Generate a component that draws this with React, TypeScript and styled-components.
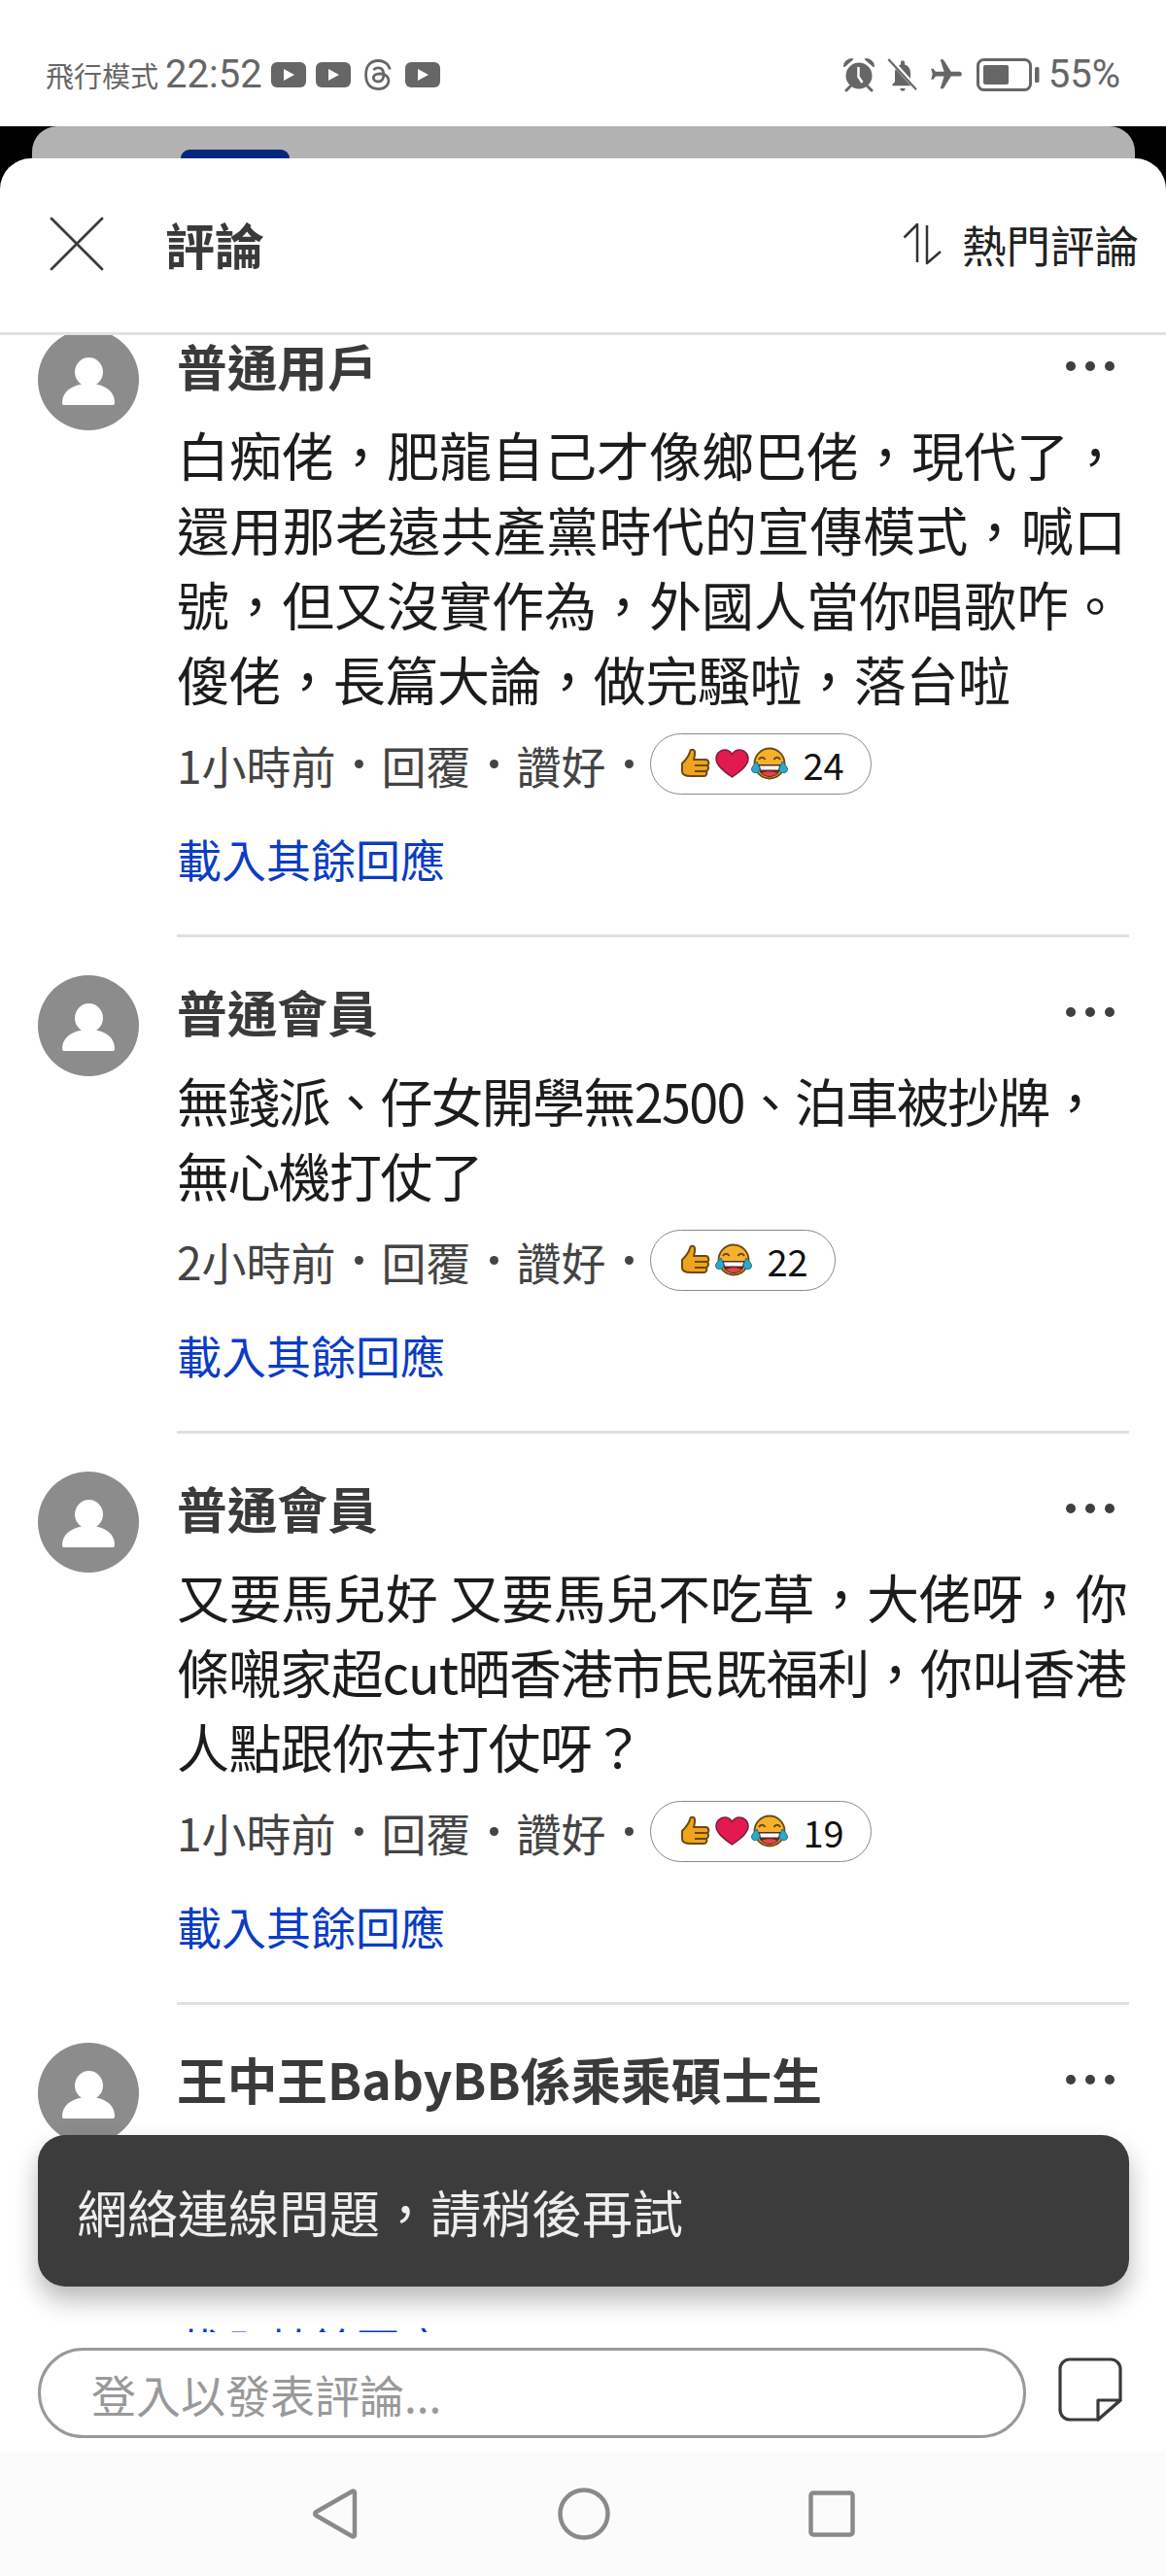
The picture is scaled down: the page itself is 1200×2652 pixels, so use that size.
import React from 'react';
import styled, { createGlobalStyle } from 'styled-components';
import { FaThreads } from 'react-icons/fa6';

const Global = createGlobalStyle`
  html, body { margin: 0; padding: 0; background: #000; }
  body { font-family: "Noto Sans CJK TC", "Noto Sans", sans-serif; }
  * { box-sizing: border-box; }
`;

const Page = styled.div`
  width: 1200px; height: 2652px; display: flex; flex-direction: column;
  background: #000; overflow: hidden;
`;
const StatusBar = styled.div`
  height: 130px; flex: none; background: #fff; color: #666;
  display: flex; align-items: center; justify-content: space-between;
  padding: 24px 47px 0 47px;
`;
const StatusGroup = styled.div`display: flex; align-items: center;`;
const Mode = styled.span`font-size: 29px; line-height: 40px; margin-right: 7px;`;
const Clock = styled.span`font-family: Roboto, sans-serif; font-size: 40px; line-height: 40px; margin-right: 9px;`;
const Percent = styled.span`font-family: Roboto, sans-serif; font-size: 40px; line-height: 40px; margin-left: 9px;`;
const PlayBadge = styled.span`
  width: 36px; height: 26px; border-radius: 6px; background: #666; margin-right: 10px;
  display: flex; align-items: center; justify-content: center;
  &::after { content: ''; border-left: 11px solid #fff; border-top: 6px solid transparent; border-bottom: 6px solid transparent; margin-left: 2px; }
`;
const ThreadsMark = styled(FaThreads)`width: 30px; height: 34px; margin: 0 13px 0 3px; color: #666;`;
const StatusIcon = styled.svg<{ $gap?: number }>`display: block; margin-right: ${p => p.$gap ?? 12}px; flex: none;`;
const PlaneIcon = styled(StatusIcon)`transform: rotate(90deg);`;

const BackStrip = styled.div`height: 33px; flex: none; padding: 0 32px 0 33px; background: #000;`;
const BackCard = styled.div`
  height: 33px; background: #b2b2b2; border-radius: 26px 26px 0 0;
  display: flex; align-items: flex-end; padding-left: 153px;
`;
const BackTab = styled.div`width: 112px; height: 9px; background: #00287f; border-radius: 9px 9px 0 0;`;

const Sheet = styled.div`
  flex: 1; min-height: 0; position: relative; background: #fff;
  border-radius: 32px 32px 0 0; display: flex; flex-direction: column; overflow: hidden;
`;
const Header = styled.header`
  height: 182px; flex: none; border-bottom: 3px solid #e2e2e2; position: relative; z-index: 2; background: transparent;
  display: flex; align-items: center; padding: 0 28px 4px 51px;
`;
const CloseIcon = styled.svg`width: 56px; height: 56px; flex: none;`;
const Title = styled.h1`margin: 0 0 0 63px; font-size: 51px; line-height: 60px; font-weight: 700; color: #3a3a3a; flex: 1;`;
const SortIcon = styled.svg`width: 42px; height: 44px; flex: none; margin-right: 19px;`;
const SortLabel = styled.span`font-size: 45.5px; line-height: 60px; font-weight: 400; color: #222;`;

const List = styled.div`flex: 1; min-height: 0; overflow: hidden;`;
const ListInner = styled.div`margin-top: -6px;`;
const Comment = styled.article`
  display: grid; grid-template-columns: 104px 1fr; column-gap: 39px; padding: 0 38px 0 39px;
`;
const Avatar = styled.svg`width: 104px; height: 104px; display: block;`;
const Content = styled.div`min-width: 0;`;
const NameRow = styled.div`display: flex; align-items: center; justify-content: space-between; height: 74px;`;
const Name = styled.div`font-size: 51.7px; line-height: 74px; font-weight: 700; color: #3a3a3a; white-space: nowrap;`;
const More = styled.div`
  display: flex; gap: 10px; margin-right: 15px; margin-top: 2px;
  span { width: 10px; height: 10px; border-radius: 50%; background: #3f3f3f; }
`;
const Body = styled.div`margin-top: 16px; font-size: 54px; line-height: 77px; color: #1c1c1c; white-space: nowrap;`;
const Line = styled.div<{ $track?: number }>`display: block; letter-spacing: ${p => p.$track ?? 0}px;`;
const Meta = styled.div`
  margin-top: 18px; height: 63px; display: flex; align-items: center;
  font-size: 46px; color: #444; white-space: nowrap;
`;
const Sep = styled.span`
  width: 47px; flex: none; display: flex; justify-content: center;
  &::before { content: ''; width: 9px; height: 9px; border-radius: 50%; background: #444; }
`;
const Pill = styled.div`
  margin-left: -2px; height: 63px; border: 1.5px solid #8a8a8a; border-radius: 32px;
  display: flex; align-items: center; padding: 0 27px 0 29px; background: #fff;
`;
const Emoji = styled.svg`width: 35px; height: 35px; display: block; flex: none; margin-right: 2px;`;
const Count = styled.span`margin-left: 14px; font-size: 38px; font-weight: 400; color: #111;`;
const LoadMore = styled.div`margin-top: 35px; font-size: 46px; line-height: 60px; color: #0b3cc4; white-space: nowrap;`;
const Divider = styled.div`margin: 49px 0 39px; height: 3px; background: #e0e0e0;`;

const Toast = styled.div`
  position: absolute; left: 39px; right: 38px; bottom: 298px; height: 156px; z-index: 3;
  background: #3c3c3c; border-radius: 28px; color: #eee; font-size: 52px;
  display: flex; align-items: center; padding-left: 40px;
  box-shadow: 0 14px 26px rgba(0,0,0,.28);
`;

const Composer = styled.div`
  flex: none; height: 123px; background: #fff; position: relative; z-index: 2;
  display: flex; align-items: flex-start; padding: 16px 45px 0 39px; gap: 33px;
`;
const InputBox = styled.div`
  flex: 1; height: 93px; border: 3px solid #999; border-radius: 47px;
  display: flex; align-items: center; padding-left: 52px;
  font-size: 46px; color: #999; white-space: nowrap;
`;
const NoteIcon = styled.svg`width: 66px; height: 66px; flex: none; margin-top: 10px;`;
const NavBar = styled.nav`
  flex: none; height: 128px; background: #fbfbfb; display: flex; align-items: center;
  justify-content: center; padding-bottom: 0;
`;
const NavIcon = styled.svg<{ $left?: number }>`display: block; margin-left: ${p => p.$left ?? 0}px; flex: none;`;

const Person = () => (
  <Avatar viewBox="0 0 104 104">
    <circle cx="52" cy="52" r="52" fill="#8c8c8c" />
    <ellipse cx="52.500" cy="44" rx="14.500" ry="15" fill="#fff" />
    <path d="M25 76c0-13 12-20 27.500-20S79 63 79 76c0 1.500-1 2-2 2H27c-1 0-2-.5-2-2z" fill="#fff" />
  </Avatar>
);
const Thumb = () => (
  <Emoji viewBox="0 0 35 35">
    <path d="M3 17c3-3 7-7 8-12 .5-3 4.500-3 5 0 .5 3-.5 6-1 8h12c4 0 4 5 2 6 2 2 1 5-1 6 1 2 0 5-2 5H12c-4 0-9-1-9-5z" fill="#f0a31c" stroke="#6a4a14" strokeWidth="2" strokeLinejoin="round" />
    <path d="M16 13h11M16 19h14M16 25h12" stroke="#6a4a14" strokeWidth="2" fill="none" />
  </Emoji>
);
const Heart = () => (
  <Emoji viewBox="0 0 35 35">
    <path d="M17.500 31C9 25 1 19 1 12 1 6 6 3 10 3c3.500 0 6 2 7.500 4.500C19 5 21.500 3 25 3c4 0 9 3 9 9 0 7-8 13-16.500 19z" fill="#e21a50" stroke="#7d1f3a" strokeWidth="1.500" />
  </Emoji>
);
const LaughMark = styled(Emoji)`width: 38px;`;
const Laugh = () => (
  <LaughMark viewBox="0 0 38 35">
    <circle cx="19" cy="17" r="15.500" fill="#f6b12c" stroke="#6a4a14" strokeWidth="1.800" />
    <path d="M8 13c1.500-3 5-3 6.500 0M23.500 13c1.500-3 5-3 6.500 0" stroke="#6a4a14" strokeWidth="2" fill="none" />
    <path d="M7 18h24c0 8-5 13-12 13S7 26 7 18z" fill="#5a2a20" />
    <path d="M9 19.500h20l-1 4H10z" fill="#fff" />
    <path d="M11 27c4-2.500 12-2.500 16 0-4 4-12 4-16 0z" fill="#e8404a" />
    <path d="M6 15c-3 3-5.500 6-5.500 8 0 3 3 4 5 3.500 3-.5 4-3.500 3-5.500z" fill="#2fa9c9" stroke="#21708a" strokeWidth="1" />
    <path d="M32 15c3 3 5.500 6 5.500 8 0 3-3 4-5 3.500-3-.5-4-3.500-3-5.500z" fill="#2fa9c9" stroke="#21708a" strokeWidth="1" />
  </LaughMark>
);

type Reaction = 'thumb' | 'heart' | 'laugh';
const reactionIcon: Record<Reaction, React.ReactNode> = { thumb: <Thumb />, heart: <Heart />, laugh: <Laugh /> };
type TextLine = { text: string; track?: number };
type Item = { name: string; lines: TextLine[]; time?: string; reactions?: Reaction[]; count?: number };

const items: Item[] = [
  { name: '普通用戶', lines: [
    { text: '白痴佬，肥龍自己才像鄉巴佬，現代了，' },
    { text: '還用那老遠共產黨時代的宣傳模式，喊口', track: 0.3 },
    { text: '號，但又沒實作為，外國人當你唱歌咋。' },
    { text: '傻佬，長篇大論，做完騷啦，落台啦', track: -0.4 },
  ], time: '1小時前', reactions: ['thumb', 'heart', 'laugh'], count: 24 },
  { name: '普通會員', lines: [
    { text: '無錢派、仔女開學無2500、泊車被抄牌，', track: -1.7 },
    { text: '無心機打仗了', track: -1.7 },
  ], time: '2小時前', reactions: ['thumb', 'laugh'], count: 22 },
  { name: '普通會員', lines: [
    { text: '又要馬兒好 又要馬兒不吃草，大佬呀，你', track: -0.3 },
    { text: '條嚫家超cut晒香港市民既福利，你叫香港', track: -1.1 },
    { text: '人點跟你去打仗呀？', track: -0.6 },
  ], time: '1小時前', reactions: ['thumb', 'heart', 'laugh'], count: 19 },
  { name: '王中王BabyBB係乘乘碩士生', lines: [{ text: '\u00a0' }] },
];

export default function App() {
  return (
    <Page>
      <Global />
      <StatusBar>
        <StatusGroup>
          <Mode>飛行模式</Mode>
          <Clock>22:52</Clock>
          <PlayBadge />
          <PlayBadge />
          <ThreadsMark />
          <PlayBadge />
        </StatusGroup>
        <StatusGroup>
          <StatusIcon $gap={12} width="34" height="36" viewBox="0 0 34 36">
            <circle cx="17" cy="19" r="13.500" fill="#666" />
            <path d="M2 9c0-4 4-7 8-7zM32 9c0-4-4-7-8-7z" fill="#666" stroke="#666" strokeWidth="2" strokeLinejoin="round" />
            <path d="M8 30l-4 4M26 30l4 4" stroke="#666" strokeWidth="3" strokeLinecap="round" />
            <path d="M16.500 10v10l4 6" stroke="#fff" strokeWidth="2.500" fill="none" />
          </StatusIcon>
          <StatusIcon $gap={10} width="32" height="36" viewBox="0 0 24 27">
            <path d="M12 26c1.100 0 2-.9 2-2h-4c0 1.100.9 2 2 2zm6-7v-7c0-3.070-1.630-5.640-4.500-6.320V4c0-.83-.67-1.500-1.500-1.500s-1.500.67-1.500 1.500v1.680C7.640 6.360 6 8.920 6 12v7l-2 2v1h16v-1l-2-2z" fill="#666" />
            <path d="M2.500 2l20 22" stroke="#fff" strokeWidth="3.500" />
            <path d="M1 1.500l21.500 23.500" stroke="#666" strokeWidth="1.600" />
          </StatusIcon>
          <PlaneIcon $gap={12} width="38" height="38" viewBox="0 0 24 24">
            <path d="M21 16v-2l-8-5V3.500c0-.83-.67-1.500-1.500-1.500S10 2.670 10 3.500V9l-8 5v2l8-2.500V19l-2 1.500V22l3.500-1 3.500 1v-1.500L13 19v-5.500l8 2.500z" fill="#666" />
          </PlaneIcon>
          <StatusIcon $gap={0} width="65" height="34" viewBox="0 0 65 34">
            <rect x="1.500" y="1.500" width="54" height="31" rx="6" fill="none" stroke="#666" strokeWidth="3" />
            <rect x="7" y="7" width="26" height="20" rx="2" fill="#666" />
            <rect x="60" y="9" width="4.500" height="16" rx="1.500" fill="#666" />
          </StatusIcon>
          <Percent>55%</Percent>
        </StatusGroup>
      </StatusBar>
      <BackStrip>
        <BackCard><BackTab /></BackCard>
      </BackStrip>
      <Sheet>
        <Header>
          <CloseIcon viewBox="0 0 56 56">
            <path d="M2 2l52 52M54 2L2 54" stroke="#3c3c3c" strokeWidth="2.800" strokeLinecap="round" />
          </CloseIcon>
          <Title>評論</Title>
          <SortIcon viewBox="0 0 42 44">
            <path d="M15 41V2L1.500 15.500" stroke="#333" strokeWidth="2.500" fill="none" strokeLinejoin="round" />
            <path d="M25 3v39l14-12" stroke="#333" strokeWidth="2.500" fill="none" strokeLinejoin="round" />
          </SortIcon>
          <SortLabel>熱門評論</SortLabel>
        </Header>
        <List>
          <ListInner>
            {items.map((c, i) => (
              <Comment key={i}>
                <Person />
                <Content>
                  <NameRow>
                    <Name>{c.name}</Name>
                    <More><span /><span /><span /></More>
                  </NameRow>
                  <Body>{c.lines.map((l, j) => <Line key={j} $track={l.track}>{l.text}</Line>)}</Body>
                  <Meta>
                    {c.time && (
                      <>
                        {c.time}<Sep />回覆<Sep />讚好<Sep />
                        <Pill>
                          {c.reactions!.map(r => <React.Fragment key={r}>{reactionIcon[r]}</React.Fragment>)}
                          <Count>{c.count}</Count>
                        </Pill>
                      </>
                    )}
                  </Meta>
                  <LoadMore>載入其餘回應</LoadMore>
                  {i < items.length - 1 && <Divider />}
                </Content>
              </Comment>
            ))}
          </ListInner>
        </List>
        <Composer>
          <InputBox>登入以發表評論...</InputBox>
          <NoteIcon viewBox="0 0 66 66">
            <path d="M12 2h42c5.500 0 10 4.500 10 10v32L41 64H12C6.500 64 2 59.500 2 54V12C2 6.500 6.500 2 12 2z" fill="#fff" stroke="#3a3a3a" strokeWidth="3.200" strokeLinejoin="round" />
            <path d="M41 64V44h23z" fill="#fff" stroke="#3a3a3a" strokeWidth="3.200" strokeLinejoin="round" />
          </NoteIcon>
        </Composer>
        <NavBar>
          <NavIcon width="48" height="54" viewBox="0 0 48 54">
            <path d="M44 5v44a1.500 1.500 0 0 1-2.400 1.200L4 28.500a2 2 0 0 1 0-3.200L41.600 3.800A1.500 1.500 0 0 1 44 5z" fill="none" stroke="#8a8a8a" strokeWidth="4.500" strokeLinejoin="round" />
          </NavIcon>
          <NavIcon $left={205} width="54" height="54" viewBox="0 0 54 54">
            <circle cx="27" cy="27" r="24.500" fill="none" stroke="#8a8a8a" strokeWidth="4.500" />
          </NavIcon>
          <NavIcon $left={204} width="48" height="48" viewBox="0 0 48 48">
            <rect x="2.500" y="2.500" width="43" height="43" rx="2.500" fill="none" stroke="#8a8a8a" strokeWidth="4.500" />
          </NavIcon>
        </NavBar>
        <Toast>網絡連線問題，請稍後再試</Toast>
      </Sheet>
    </Page>
  );
}
